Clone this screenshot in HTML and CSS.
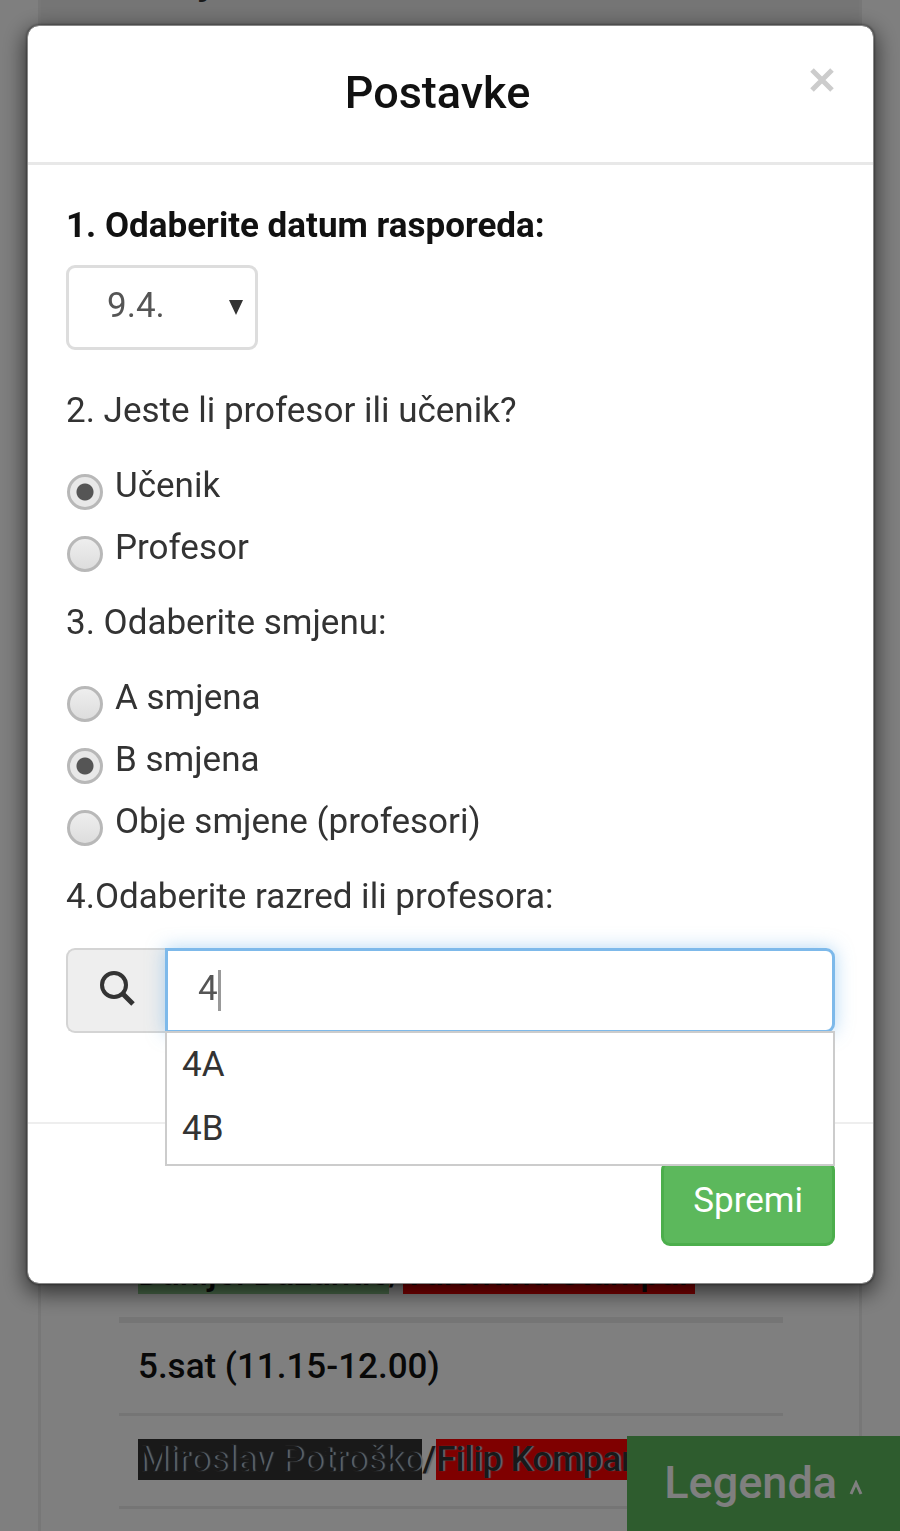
FILE: index.html
```html
<!DOCTYPE html>
<html lang="hr">
<head>
<meta charset="utf-8">
<meta name="viewport" content="width=device-width, initial-scale=1">
<title>Postavke</title>
<link rel="stylesheet" href="styles.css">
</head>
<body>
<main class="schedule">
  <h2 class="schedule-title">Srijeda</h2>
  <ul class="lessons">
    <li class="lesson lesson-last"><span class="mark mark-green">Danijel Bazantić</span>/<span class="mark mark-red">Valentina Štampar</span></li>
    <li class="lesson">5.sat (11.15-12.00)</li>
    <li class="lesson lesson-names"><span class="mark mark-dark">Miroslav Potroško</span>/<span class="mark mark-red">Filip Kompar</span></li>
    <li class="lesson"></li>
  </ul>
</main>
<button class="legend" type="button">Legenda
  <svg class="legend-icon" viewBox="0 0 14 16" aria-hidden="true"><path d="M2 14 7 3l5 11" fill="none" stroke="currentColor" stroke-width="3"/></svg>
</button>

<div class="backdrop">
  <form class="modal" role="dialog" aria-labelledby="modal-title">
    <header class="modal-header">
      <h1 class="modal-title" id="modal-title">Postavke</h1>
      <button class="close" type="button" aria-label="Zatvori">
        <svg class="close-icon" viewBox="0 0 26 26" aria-hidden="true"><path d="M3 3 23 23M23 3 3 23" fill="none" stroke="currentColor" stroke-width="5"/></svg>
      </button>
    </header>

    <div class="modal-body">
      <label class="question question-strong" for="date">1. Odaberite datum rasporeda:</label>
      <div class="select-wrap">
        <select class="select" id="date"><option>9.4.</option></select>
        <svg class="select-arrow" viewBox="0 0 16 16" aria-hidden="true"><path d="M1 1h14L8 16z" fill="currentColor"/></svg>
      </div>

      <fieldset class="group">
        <legend class="question">2. Jeste li profesor ili učenik?</legend>
        <label class="option"><input class="radio" type="radio" name="role" checked>Učenik</label>
        <label class="option"><input class="radio" type="radio" name="role">Profesor</label>
      </fieldset>

      <fieldset class="group">
        <legend class="question">3. Odaberite smjenu:</legend>
        <label class="option"><input class="radio" type="radio" name="shift">A smjena</label>
        <label class="option"><input class="radio" type="radio" name="shift" checked>B smjena</label>
        <label class="option"><input class="radio" type="radio" name="shift">Obje smjene (profesori)</label>
      </fieldset>

      <label class="question" for="search">4.Odaberite razred ili profesora:</label>
      <div class="search">
        <span class="search-addon">
          <svg class="search-icon" viewBox="0 0 36 36" aria-hidden="true"><circle cx="15" cy="14" r="12" fill="none" stroke="currentColor" stroke-width="4"/><path d="m23 22 11 11" stroke="currentColor" stroke-width="5"/></svg>
        </span>
        <div class="combo">
          <input class="search-input" id="search" type="text" value="4" autocomplete="off">
          <span class="cursor"></span>
          <ul class="menu">
            <li class="menu-item">4A</li>
            <li class="menu-item">4B</li>
          </ul>
        </div>
      </div>
    </div>

    <footer class="modal-footer">
      <button class="save" type="submit">Spremi</button>
    </footer>
  </form>
</div>
</body>
</html>
```
FILE: styles.css
```css
* {
  box-sizing: border-box;
}

body {
  margin: 0;
  background: #fff;
  color: #333;
  font: 35px/48px Roboto, "Noto Sans", sans-serif;
}

button,
input,
select {
  font: inherit;
}

h1,
h2,
ul,
fieldset,
legend {
  margin: 0;
  padding: 0;
}

ul {
  list-style: none;
}

/* Schedule behind the dialog */
.schedule {
  display: flex;
  flex-direction: column;
  justify-content: space-between;
  height: 100vh;
  margin: 0 38px;
  border: solid #eee;
  border-width: 0 3px;
  overflow: hidden;
}

.schedule-title {
  margin-top: -40px;
  padding: 0 116px 60px;
  background: #ebebeb;
  font-size: 35px;
}

.lessons {
  padding: 0 76px 0 78px;
}

.lesson {
  height: 93px;
  padding: 20px 19px;
  border-top: 3px solid #ebebeb;
  color: #111;
  font-weight: 500;
  white-space: nowrap;
}

.lesson-last {
  border-bottom: 3px solid #ebebeb;
}

.lesson:last-child {
  height: 25px;
  padding: 0;
}

.lesson-names {
  color: #333;
  text-shadow: 2px 0 1px #ccc;
}

.mark-green {
  background: #90d090;
}

.mark-red {
  padding-right: 4px;
  background: #f00;
}

.mark-dark {
  background: #333;
}

.legend {
  position: fixed;
  right: 0;
  bottom: 0;
  display: flex;
  align-items: center;
  gap: 12px;
  padding: 23px 37px 24px;
  border: 0;
  background: #5cb85c;
  color: #fff;
  font-size: 45px;
  font-weight: 500;
}

.legend-icon {
  width: 14px;
  height: 16px;
  margin-top: 10px;
}

/* Dialog */
.backdrop {
  position: fixed;
  inset: 0;
  padding: 25px 26px 25px 27px;
  background: rgba(0, 0, 0, 0.5);
  overflow: auto;
}

.modal {
  border: 1px solid #888;
  border-radius: 12px;
  background: #fff;
  background-clip: padding-box;
  box-shadow: 0 7px 22px 2px rgba(0, 0, 0, 0.6), 0 0 3px rgba(0, 0, 0, 0.6);
}

.modal-header {
  display: flex;
  align-items: flex-start;
  padding: 41px 38px 43px;
  border-bottom: 3px solid #e8e8e8;
}

.modal-title {
  flex: 1;
  color: #111;
  font-size: 45px;
  font-weight: 500;
  line-height: 52px;
  text-align: center;
}

.close {
  display: flex;
  padding: 0;
  border: 0;
  background: none;
  color: #ccc;
}

.close-icon {
  width: 26px;
  height: 26px;
}

.modal-body {
  padding: 37px 38px 89px;
}

.question {
  display: block;
}

.question-strong {
  color: #111;
  font-weight: 700;
}

.select-wrap {
  position: relative;
  width: 192px;
  margin: 15px 0 37px;
}

.select {
  display: block;
  width: 100%;
  height: 85px;
  padding: 0 38px 4px;
  border: 3px solid #ddd;
  border-radius: 9px;
  appearance: none;
  background: #fff;
  color: #555;
}

.select-arrow {
  position: absolute;
  top: 34px;
  right: 14px;
  width: 16px;
  height: 16px;
  color: #333;
  pointer-events: none;
}

.group {
  margin-bottom: 20px;
  border: 0;
}

.group .question {
  margin-bottom: 20px;
}

.option {
  display: flex;
  align-items: center;
  gap: 12px;
  height: 62px;
}

.radio {
  width: 36px;
  height: 36px;
  margin: 12px 0 0 1px;
  border: 3px solid #b8b8b8;
  border-radius: 50%;
  appearance: none;
  background: linear-gradient(#eee, #ddd);
}

.radio:checked {
  background: radial-gradient(circle, #555 8px, #e8e8e8 9px);
}

.search {
  display: flex;
  margin-top: 27px;
}

.search-addon {
  display: flex;
  align-items: center;
  justify-content: center;
  width: 99px;
  padding-bottom: 4px;
  border: 2px solid #d4d4d4;
  border-right: 0;
  border-radius: 9px 0 0 9px;
  background: #eee;
}

.search-icon {
  width: 36px;
  height: 36px;
}

.combo {
  position: relative;
  flex: 1;
}

.search-input {
  display: block;
  width: 100%;
  height: 85px;
  padding: 0 30px 4px;
  border: 3px solid #7db9ea;
  border-radius: 0 9px 9px 0;
  outline: 0;
  box-shadow: 0 0 18px rgba(102, 175, 233, 0.5);
  color: #555;
}

.cursor {
  position: absolute;
  top: 22px;
  left: 53px;
  width: 3px;
  height: 41px;
  background: #999;
}

.menu {
  position: absolute;
  top: 83px;
  right: 0;
  left: 0;
  padding-bottom: 3px;
  border: 2px solid #ccc;
  background: #fff;
}

.menu-item {
  padding: 8px 15px;
}

.modal-footer {
  display: flex;
  justify-content: flex-end;
  padding: 37px 38px;
  border-top: 2px solid #eee;
}

.save {
  height: 85px;
  padding: 0 29px 6px;
  border: 3px solid #4cae4c;
  border-radius: 9px;
  background: #5cb85c;
  color: #fff;
}
```
